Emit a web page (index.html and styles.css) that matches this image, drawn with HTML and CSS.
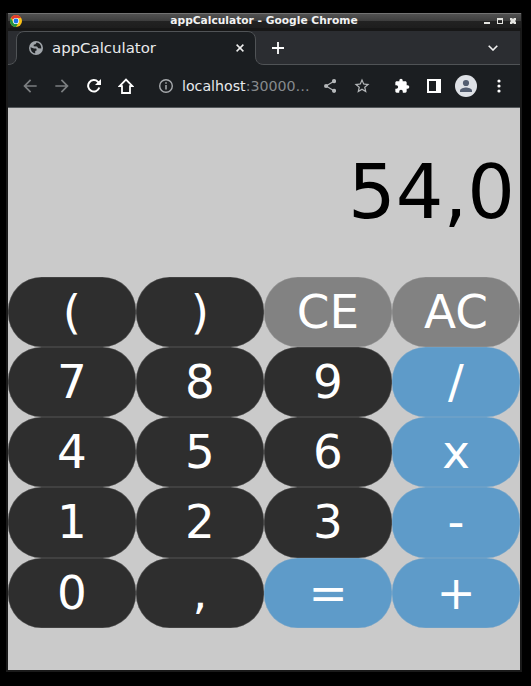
FILE: index.html
```html
<!DOCTYPE html>
<html lang="en">
<head>
<meta charset="utf-8">
<title>appCalculator</title>
<link rel="stylesheet" href="styles.css">
</head>
<body>
<div class="window">
  <header class="titlebar">
    <svg class="chrome-logo" viewBox="0 0 12 12">
      <circle cx="6" cy="6" r="6" fill="#fbc116"/>
      <path d="M6 6 .8 3A6 6 0 0 1 11.2 3H6Z" fill="#e33b2e"/>
      <path d="M.8 3A6 6 0 0 0 6 12L8.6 7.5 6 6 3.4 7.5Z" fill="#229342"/>
      <circle cx="6" cy="6" r="3.1" fill="#fff"/>
      <circle cx="6" cy="6" r="2.4" fill="#1a73e8"/>
    </svg>
    <span class="window-title">appCalculator - Google Chrome</span>
    <svg class="window-controls" viewBox="0 0 34 8">
      <path d="M1 5h6v2H1z" fill="#e4e4e0"/>
      <path d="M14 1h6v6h-6zM15 3v3h4V3z" fill="#e4e4e0" fill-rule="evenodd"/>
      <path d="M27 1h2l1 1 1-1h2v2l-1 1 1 1v2h-2l-1-1-1 1h-2V5l1-1-1-1z" fill="#e4e4e0"/>
    </svg>
  </header>
  <div class="tabstrip">
    <svg class="tab-outline" viewBox="0 0 512 34">
      <path d="M0 33.500C5.500 33.500 8.500 30.500 8.500 25V9C8.500 3.500 11.500.500 17 .500H239C244.500.500 247.500 3.500 247.500 9V25C247.500 30.500 250.500 33.500 256 33.500H512V35H0Z" fill="#1b1e21" stroke="#505356"/>
    </svg>
    <div class="tab">
      <svg class="globe" viewBox="0 0 14 14">
        <circle cx="7" cy="7" r="7" fill="#a0a5aa"/>
        <path d="M1.500 6.200 5 7.400l2.200.2.6 1.600-1.600.8v2.400C3.200 12 1.500 9.500 1.500 6.200ZM7.600 1.600 6.500 3.200 4.700 3.700v1.500l3.300.3 1.300 1.700 2.900.4c.5-2.900-1.500-5.600-4.600-6Z" fill="#1b1e21"/>
      </svg>
      <span class="tab-title">appCalculator</span>
      <svg class="tab-close" viewBox="0 0 8 8"><path d="m.6.600 6.800 6.800m0-6.800L.6 7.400" stroke="#eee" stroke-width="1.500"/></svg>
    </div>
    <div class="strip-rest">
      <svg class="new-tab" viewBox="0 0 12 12"><path d="M6 0v12M0 6h12" stroke="#fff" stroke-width="1.800"/></svg>
      <svg class="chevron" viewBox="0 0 10 6"><path d="m.7.700 4.300 4.300L9.300.7" fill="none" stroke="#f1f1f1" stroke-width="1.600"/></svg>
    </div>
  </div>
  <nav class="toolbar">
    <svg class="icon back" viewBox="0 0 24 24"><path d="M20 11H7.830l5.590-5.590L12 4l-8 8 8 8 1.410-1.410L7.830 13H20z"/></svg>
    <svg class="icon forward" viewBox="0 0 24 24"><path d="m12 4-1.410 1.410L16.170 11H4v2h12.170l-5.580 5.590L12 20l8-8z"/></svg>
    <svg class="icon reload" viewBox="0 0 14 14"><path d="M12.300 8.500A5.700 5.700 0 1 1 11 2.900l.8.900" fill="none" stroke="#fff" stroke-width="2"/><path d="M14 0v6H8z"/></svg>
    <svg class="icon home" viewBox="0 0 16 16"><path d="M1.600 8.200 8 1.600l6.400 6.600H12V15H4V8.200z" fill="none" stroke="#fff" stroke-width="1.800"/></svg>
    <svg class="icon info" viewBox="0 0 14 14"><circle cx="7" cy="7" r="6.300" fill="none" stroke="#a7aaad" stroke-width="1.400"/><path d="M6.250 6h1.500v4.500h-1.500zm0-2.700h1.500v1.500h-1.500z"/></svg>
    <span class="url">localhost<span class="port">:30000…</span></span>
    <svg class="icon share" viewBox="0 0 12 14"><path d="M10 2.200 2 7l8 4.800" fill="none" stroke="#b5b8ba" stroke-width="1.200"/><circle cx="10" cy="2.200" r="2.100"/><circle cx="2.100" cy="7" r="2.100"/><circle cx="10" cy="11.800" r="2.100"/></svg>
    <svg class="icon star" viewBox="0 0 24 24"><path d="m22 9.240-7.190-.62L12 2 9.190 8.630 2 9.240l5.460 4.730L5.820 21 12 17.270 18.180 21l-1.630-7.030zM12 15.400l-3.760 2.270 1-4.280-3.320-2.880 4.380-.38L12 6.100l1.710 4.040 4.380.38-3.320 2.880 1 4.280z"/></svg>
    <svg class="icon puzzle" viewBox="0 0 24 24"><path d="M20.500 11H19V7c0-1.100-.9-2-2-2h-4V3.500a2.500 2.500 0 0 0-5 0V5H4c-1.100 0-1.990.9-1.990 2v3.800H3.500a2.700 2.700 0 0 1 0 5.400H2V20c0 1.100.9 2 2 2h3.800v-1.500a2.700 2.700 0 0 1 5.400 0V22H17c1.100 0 2-.9 2-2v-4h1.500a2.500 2.500 0 0 0 0-5z"/></svg>
    <svg class="icon panel" viewBox="0 0 14 14"><path d="M0 0h14v14H0zM2 2v10h7V2z" fill-rule="evenodd"/></svg>
    <svg class="icon avatar" viewBox="0 0 22 22"><circle cx="11" cy="11" r="11" fill="#dee1e6"/><circle cx="11" cy="8" r="3.100" fill="#535d70"/><path d="M5 17v-1.500C5 13.500 9 12.500 11 12.500s6 1 6 3V17z" fill="#535d70"/></svg>
    <svg class="icon more" viewBox="0 0 4 14"><circle cx="2" cy="2" r="1.600"/><circle cx="2" cy="7" r="1.600"/><circle cx="2" cy="12" r="1.600"/></svg>
  </nav>
  <main class="calculator">
    <output class="display">54,0</output>
    <div class="keys">
      <button class="key">(</button><button class="key">)</button><button class="key clear">CE</button><button class="key clear">AC</button>
      <button class="key">7</button><button class="key">8</button><button class="key">9</button><button class="key op">/</button>
      <button class="key">4</button><button class="key">5</button><button class="key">6</button><button class="key op">x</button>
      <button class="key">1</button><button class="key">2</button><button class="key">3</button><button class="key op">-</button>
      <button class="key">0</button><button class="key">,</button><button class="key op">=</button><button class="key op">+</button>
    </div>
  </main>
</div>
</body>
</html>
```
FILE: styles.css
```css
* { box-sizing: border-box; }
body {
  margin: 0;
  width: 531px;
  height: 686px;
  padding: 13px 9px 14px 6px;
  background: #000;
  font-family: "DejaVu Sans", sans-serif;
  overflow: hidden;
}
svg { display: block; flex: none; }
.window {
  width: 516px;
  height: 659px;
  border: 2px solid #1a1a1a;
  border-top: 0;
  display: flex;
  flex-direction: column;
}
.titlebar {
  height: 18px;
  flex: none;
  display: flex;
  align-items: center;
  padding: 0 4px 2px 2px;
  margin: 0 -1px 0 0;
  border-top: 1px solid #727272;
  background: linear-gradient(#515151 0, #3d3d3d 7px, #222 7px, #1e1e1e 14px, #171717 14px);
}
.chrome-logo { width: 12px; height: 12px; margin-bottom: 1px; }
.window-title {
  flex: 1;
  padding: 0 0 1px 23px;
  text-align: center;
  font-size: 10.67px;
  font-weight: bold;
  line-height: 12px;
  color: #f2f2f2;
  white-space: nowrap;
}
.window-controls { width: 34px; height: 8px; margin-bottom: 1px; }
.tabstrip { position: relative; height: 34px; flex: none; display: flex; background: #2b2d31; }
.tab-outline { position: absolute; inset: 0; width: 512px; height: 34px; }
.tab {
  position: relative;
  width: 248px;
  display: flex;
  align-items: center;
  padding: 0 12px 0 21px;
}
.globe { width: 14px; height: 14px; }
.tab-title { flex: 1; margin-left: 9px; font-size: 14.95px; line-height: 20px; color: #e9eaeb; }
.tab-close { width: 8px; height: 8px; }
.strip-rest {
  position: relative;
  flex: 1;
  display: flex;
  align-items: center;
  justify-content: space-between;
  padding: 0 22px 0 16px;
}
.new-tab { width: 12px; height: 12px; }
.chevron { width: 10px; height: 6px; }
.toolbar {
  height: 43px;
  flex: none;
  display: flex;
  align-items: center;
  padding: 0 19px 1px 12px;
  background: #1b1e21;
  border-bottom: 1px solid #54585b;
}
.icon { fill: #fff; }
.back, .forward { width: 20px; height: 20px; fill: #7b7e80; }
.forward { margin-left: 12px; }
.reload { width: 14px; height: 14px; margin-left: 15px; }
.home { width: 16px; height: 16px; margin-left: 17px; }
.info { width: 14px; height: 14px; margin-left: 25px; margin-top: 1px; fill: #a7aaad; }
.url { width: 142px; margin-left: 9px; padding-top: 1px; font-size: 14.2px; line-height: 20px; color: #e8eaed; white-space: nowrap; }
.port { color: #868a8d; }
.share { width: 12px; height: 14px; fill: #b5b8ba; margin-top: 1px; }
.star { width: 18px; height: 18px; margin-left: 17px; fill: #b5b8ba; }
.puzzle { width: 16px; height: 16px; margin-left: 23px; }
.panel { width: 14px; height: 14px; margin-left: 17px; }
.avatar { width: 22px; height: 22px; margin-left: 14px; margin-top: 1px; }
.more { width: 4px; height: 14px; margin-left: 19.5px; }
.calculator { flex: 1; background: #cacaca; }
.display {
  display: block;
  height: 168.6px;
  padding-right: 5px;
  text-align: right;
  font-size: 75px;
  line-height: 169px;
  color: #000;
}
.keys { display: grid; grid-template-columns: repeat(4, 128px); grid-auto-rows: 70.25px; }
.key {
  margin: 0;
  padding: 0;
  border: 0;
  border-radius: 33.5px;
  background: #2e2e2e;
  box-shadow: inset 0 0 0 .6px rgb(202 202 202 / 25%);
  color: #fff;
  font: 46.83px/70px "DejaVu Sans", sans-serif;
}
.clear { background: #828282; }
.op { background: #5e9bc9; }
```
